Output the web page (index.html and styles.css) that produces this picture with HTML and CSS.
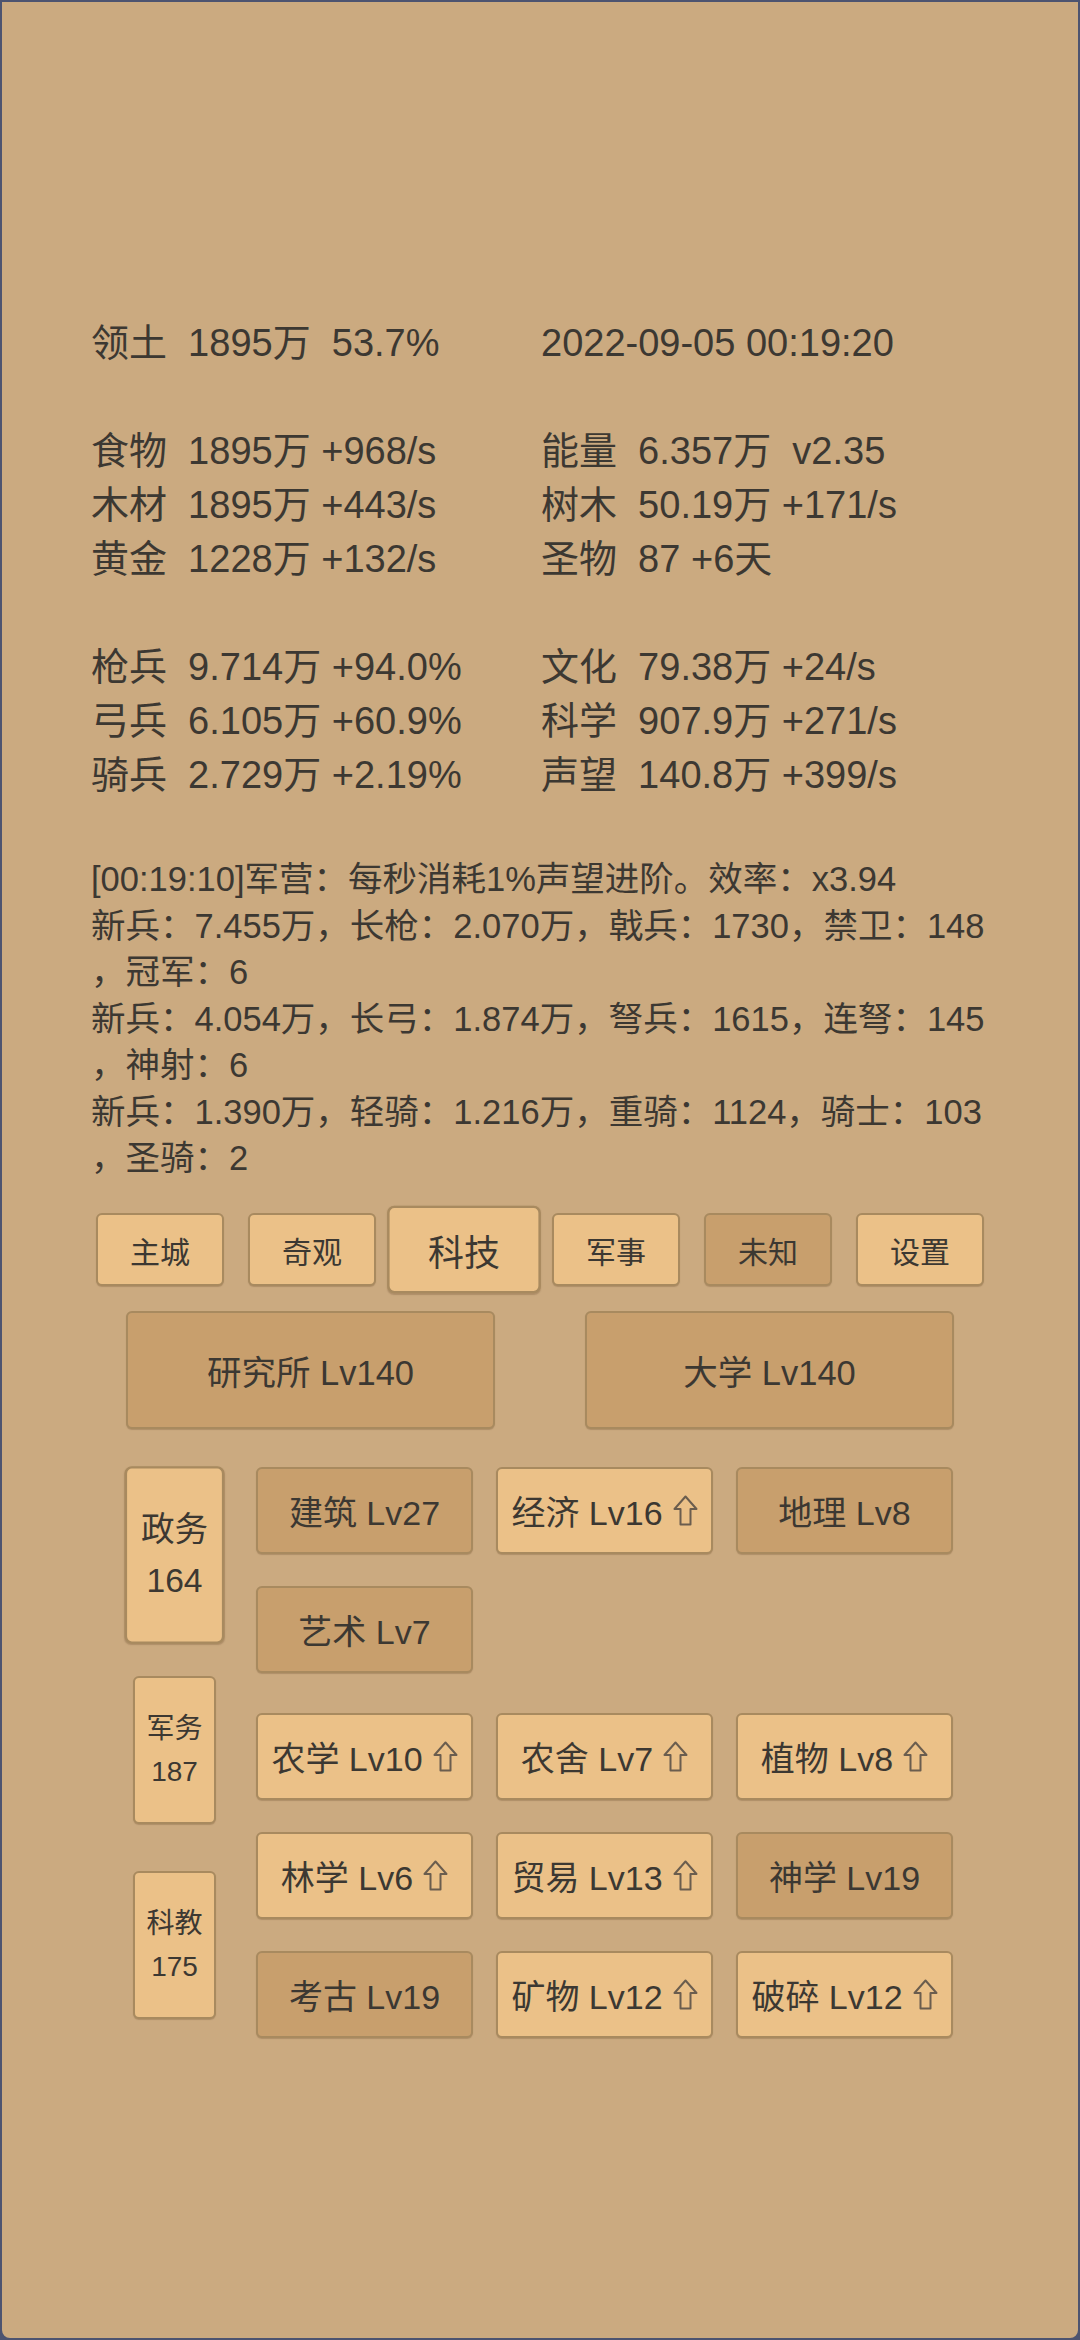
FILE: index.html
```html
<!DOCTYPE html>
<html lang="zh-CN">
<head>
<meta charset="utf-8">
<title>科技</title>
<link rel="stylesheet" href="styles.css">
</head>
<body>
<div class="page">
  <div class="stats">
    <div class="cell">领土  1895万  53.7%</div><div class="cell">2022-09-05 00:19:20</div>
    <div class="cell"></div><div class="cell"></div>
    <div class="cell">食物  1895万 +968/s</div><div class="cell">能量  6.357万  v2.35</div>
    <div class="cell">木材  1895万 +443/s</div><div class="cell">树木  50.19万 +171/s</div>
    <div class="cell">黄金  1228万 +132/s</div><div class="cell">圣物  87 +6天</div>
    <div class="cell"></div><div class="cell"></div>
    <div class="cell">枪兵  9.714万 +94.0%</div><div class="cell">文化  79.38万 +24/s</div>
    <div class="cell">弓兵  6.105万 +60.9%</div><div class="cell">科学  907.9万 +271/s</div>
    <div class="cell">骑兵  2.729万 +2.19%</div><div class="cell">声望  140.8万 +399/s</div>
  </div>

  <div class="log">
    <div class="line">[00:19:10]军营：每秒消耗1%声望进阶。效率：x3.94</div>
    <div class="line">新兵：7.455万，长枪：2.070万，戟兵：1730，禁卫：148</div>
    <div class="line">，冠军：6</div>
    <div class="line">新兵：4.054万，长弓：1.874万，弩兵：1615，连弩：145</div>
    <div class="line">，神射：6</div>
    <div class="line">新兵：1.390万，轻骑：1.216万，重骑：1124，骑士：103</div>
    <div class="line">，圣骑：2</div>
  </div>

  <div class="tabs">
    <div class="btn tab light">主城</div>
    <div class="btn tab light">奇观</div>
    <div class="btn tab light selected">科技</div>
    <div class="btn tab light">军事</div>
    <div class="btn tab dark">未知</div>
    <div class="btn tab light">设置</div>
  </div>

  <div class="bigrow">
    <div class="btn big dark">研究所 Lv140</div>
    <div class="btn big dark">大学 Lv140</div>
  </div>

  <div class="techarea">
    <div class="side">
      <div class="btn sidetab light selected"><span>政务</span><span>164</span></div>
      <div class="btn sidetab light"><span>军务</span><span>187</span></div>
      <div class="btn sidetab light"><span>科教</span><span>175</span></div>
    </div>
    <div class="groups">
      <div class="grid">
        <div class="btn tech dark">建筑 Lv27</div>
        <div class="btn tech light">经济 Lv16 <svg class="up" viewBox="0 0 25 31"><path d="M12.5 1.5 L23.5 14 L17.5 14 L17.5 29.5 L7.5 29.5 L7.5 14 L1.5 14 Z"/></svg></div>
        <div class="btn tech dark">地理 Lv8</div>
        <div class="btn tech dark">艺术 Lv7</div>
      </div>
      <div class="grid second">
        <div class="btn tech light">农学 Lv10 <svg class="up" viewBox="0 0 25 31"><path d="M12.5 1.5 L23.5 14 L17.5 14 L17.5 29.5 L7.5 29.5 L7.5 14 L1.5 14 Z"/></svg></div>
        <div class="btn tech light">农舍 Lv7 <svg class="up" viewBox="0 0 25 31"><path d="M12.5 1.5 L23.5 14 L17.5 14 L17.5 29.5 L7.5 29.5 L7.5 14 L1.5 14 Z"/></svg></div>
        <div class="btn tech light">植物 Lv8 <svg class="up" viewBox="0 0 25 31"><path d="M12.5 1.5 L23.5 14 L17.5 14 L17.5 29.5 L7.5 29.5 L7.5 14 L1.5 14 Z"/></svg></div>
        <div class="btn tech light">林学 Lv6 <svg class="up" viewBox="0 0 25 31"><path d="M12.5 1.5 L23.5 14 L17.5 14 L17.5 29.5 L7.5 29.5 L7.5 14 L1.5 14 Z"/></svg></div>
        <div class="btn tech light">贸易 Lv13 <svg class="up" viewBox="0 0 25 31"><path d="M12.5 1.5 L23.5 14 L17.5 14 L17.5 29.5 L7.5 29.5 L7.5 14 L1.5 14 Z"/></svg></div>
        <div class="btn tech dark">神学 Lv19</div>
        <div class="btn tech dark">考古 Lv19</div>
        <div class="btn tech light">矿物 Lv12 <svg class="up" viewBox="0 0 25 31"><path d="M12.5 1.5 L23.5 14 L17.5 14 L17.5 29.5 L7.5 29.5 L7.5 14 L1.5 14 Z"/></svg></div>
        <div class="btn tech light">破碎 Lv12 <svg class="up" viewBox="0 0 25 31"><path d="M12.5 1.5 L23.5 14 L17.5 14 L17.5 29.5 L7.5 29.5 L7.5 14 L1.5 14 Z"/></svg></div>
      </div>
    </div>
  </div>
</div>
</body>
</html>
```

FILE: styles.css
```css
html, body {
  margin: 0;
  padding: 0;
  background: #4d5470;
}
body {
  font-family: "Liberation Sans", "Noto Sans CJK SC", sans-serif;
  color: #3c3832;
}
.page {
  box-sizing: border-box;
  width: 1080px;
  height: 2340px;
  border: 2px solid #4d5470;
  border-radius: 0 0 10px 10px;
  background: #cbaa80;
  padding: 314px 89px 0 89px;
  overflow: hidden;
}
.stats {
  display: grid;
  grid-template-columns: 450px 1fr;
  font-size: 38px;
  line-height: 54px;
}
.cell {
  min-height: 54px;
  white-space: pre;
}
.log {
  margin-top: 54px;
  font-size: 34.5px;
  line-height: 46.5px;
}
.line {
  white-space: pre;
}
.btn {
  box-sizing: border-box;
  display: flex;
  align-items: center;
  justify-content: center;
  border: 2px solid #a88a5f;
  border-radius: 6px;
  box-shadow: 0 1px 1px rgba(90, 60, 30, 0.25);
  white-space: nowrap;
}
.light {
  background: #ebc188;
}
.dark {
  background: #c89f6d;
}
.tabs {
  margin-top: 31.5px;
  display: flex;
  justify-content: center;
  gap: 24px;
}
.tab {
  width: 128px;
  height: 73px;
  font-size: 30px;
}
.selected {
  transform: scale(1.2);
  position: relative;
  z-index: 1;
}
.bigrow {
  margin-top: 25px;
  display: flex;
  justify-content: center;
  gap: 90px;
}
.big {
  width: 369px;
  height: 118px;
  font-size: 34.5px;
}
.techarea {
  margin-top: 38px;
  padding-left: 42px;
  display: flex;
  gap: 40px;
}
.side {
  width: 83px;
  padding-top: 14px;
  display: flex;
  flex-direction: column;
  gap: 47px;
}
.sidetab {
  width: 83px;
  height: 148px;
  flex-direction: column;
  font-size: 28px;
  line-height: 43px;
}
.grid {
  display: grid;
  grid-template-columns: repeat(3, 217px);
  column-gap: 23px;
  row-gap: 32px;
}
.grid.second {
  margin-top: 40px;
}
.tech {
  height: 87px;
  font-size: 34px;
}
.up {
  width: 25px;
  height: 31px;
  margin-left: 10px;
  fill: none;
  stroke: #6a5d4e;
  stroke-width: 2;
  stroke-linejoin: round;
}
```
